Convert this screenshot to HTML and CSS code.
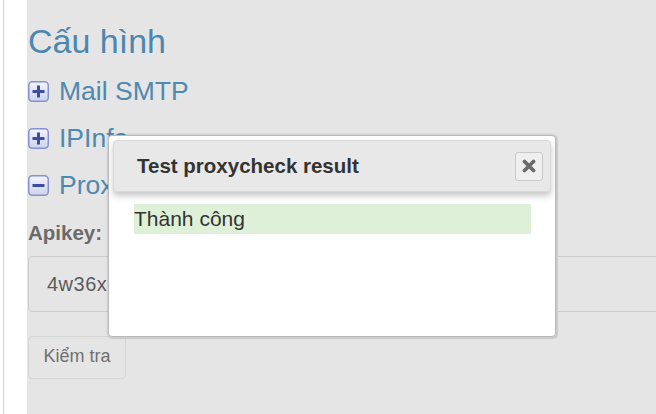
FILE: index.html
```html
<!DOCTYPE html>
<html lang="vi">
<head>
<meta charset="utf-8">
<title>Cấu hình</title>
<link rel="stylesheet" href="styles.css">
</head>
<body>
<div class="page">
  <div class="edge"></div>
  <div class="rule"></div>
  <div class="gutter"></div>
  <main class="main">
    <h1 class="title">Cấu hình</h1>
    <div class="section">
      <svg class="toggle" width="21" height="21" viewBox="0 0 21 21"><defs><linearGradient id="tg1" x1="0" y1="0" x2="0" y2="1"><stop offset="0" stop-color="#f3f4fb"/><stop offset="1" stop-color="#cdd3ee"/></linearGradient></defs><rect x="0.75" y="0.75" width="19.5" height="19.5" rx="3.5" fill="url(#tg1)" stroke="#8791cf" stroke-width="1.5"/><path d="M4.5 10.5h12M10.5 4.5v12" stroke="#3c4da3" stroke-width="3"/></svg>
      <span>Mail SMTP</span>
    </div>
    <div class="section">
      <svg class="toggle" width="21" height="21" viewBox="0 0 21 21"><defs><linearGradient id="tg2" x1="0" y1="0" x2="0" y2="1"><stop offset="0" stop-color="#f3f4fb"/><stop offset="1" stop-color="#cdd3ee"/></linearGradient></defs><rect x="0.75" y="0.75" width="19.5" height="19.5" rx="3.5" fill="url(#tg2)" stroke="#8791cf" stroke-width="1.5"/><path d="M4.5 10.5h12M10.5 4.5v12" stroke="#3c4da3" stroke-width="3"/></svg>
      <span>IPInfo</span>
    </div>
    <div class="section">
      <svg class="toggle" width="21" height="21" viewBox="0 0 21 21"><defs><linearGradient id="tg3" x1="0" y1="0" x2="0" y2="1"><stop offset="0" stop-color="#f3f4fb"/><stop offset="1" stop-color="#cdd3ee"/></linearGradient></defs><rect x="0.75" y="0.75" width="19.5" height="19.5" rx="3.5" fill="url(#tg3)" stroke="#8791cf" stroke-width="1.5"/><path d="M4.5 10.5h12" stroke="#3c4da3" stroke-width="3"/></svg>
      <span>Proxycheck</span>
    </div>
    <div class="label">Apikey:</div>
    <div class="input">4w36x9-7k51p2-0832m6-a1r4e7</div>
    <button class="btn" type="button">Kiểm tra</button>
  </main>
</div>

<div class="dialog" role="dialog">
  <div class="dialog-head">
    <span class="dialog-title">Test proxycheck result</span>
    <button class="close" type="button" aria-label="close"><svg width="14" height="14" viewBox="0 0 14 14"><path d="M2.5 2.5l9 9M11.5 2.5l-9 9" stroke="#6b6b6b" stroke-width="3.8" stroke-linecap="round"/></svg></button>
  </div>
  <div class="dialog-body">
    <div class="success">Thành công</div>
  </div>
</div>
</body>
</html>
```

FILE: styles.css
```css
* { box-sizing: border-box; }

html, body {
  margin: 0;
  padding: 0;
  background: #ffffff;
  font-family: "Liberation Sans", Arial, sans-serif;
}

.page {
  display: flex;
  height: 414px;
  overflow: hidden;
}

.edge { width: 3px; background: #ffffff; }
.rule { width: 1px; background: #d2d2d2; }
.gutter { width: 23px; background: #ffffff; }

.main {
  flex: 1;
  background: #e5e5e5;
  padding-left: 1px;
  overflow: hidden;
}

.title {
  margin: 21px 0 0;
  font-size: 34px;
  line-height: 40px;
  font-weight: normal;
  color: #4c87af;
}

.section {
  display: flex;
  align-items: center;
  gap: 10px;
  height: 30px;
  margin-top: 17px;
  font-size: 26.5px;
  line-height: 30px;
  color: #4f89b0;
}

.section:first-of-type { margin-top: 15px; }

.toggle { flex: none; }

.label {
  margin-top: 21px;
  font-size: 20.5px;
  line-height: 24px;
  font-weight: bold;
  color: #6a6a6a;
}

.input {
  margin-top: 11px;
  width: 660px;
  height: 56px;
  border: 1px solid #cdcdcd;
  border-radius: 4px;
  padding-left: 18px;
  font-size: 20px;
  letter-spacing: 0.5px;
  line-height: 54px;
  color: #5a5a5a;
  white-space: nowrap;
  overflow: hidden;
}

.btn {
  display: block;
  margin-top: 24px;
  width: 98px;
  height: 43px;
  padding: 0 0 2px;
  background: #e5e5e5;
  border: 1px solid #d5d5d5;
  border-radius: 4px;
  font-family: "Liberation Sans", Arial, sans-serif;
  font-size: 18px;
  line-height: 39px;
  color: #707070;
}

.dialog {
  position: absolute;
  left: 108px;
  top: 135px;
  width: 448px;
  height: 202px;
  background: #ffffff;
  border: 1px solid #b9b9b9;
  border-radius: 4px;
  padding: 4px;
  box-shadow: 1px 1px 0 1px #cbcbcb, 0 0 3px rgba(0, 0, 0, 0.2);
}

.dialog-head {
  display: flex;
  align-items: center;
  justify-content: space-between;
  height: 52px;
  padding: 0 7px 0 23px;
  background: #e8e8e8;
  border: 1px solid #dadada;
  border-radius: 4px;
  box-shadow: 0 4px 6px rgba(0, 0, 0, 0.22);
}

.dialog-title {
  font-size: 20.5px;
  line-height: 22px;
  font-weight: bold;
  color: #333333;
}

.close {
  display: flex;
  align-items: center;
  justify-content: center;
  width: 28px;
  height: 29px;
  padding: 0;
  background: #efefef;
  border: 1px solid #c9c9c9;
  border-radius: 3px;
}

.dialog-body {
  padding: 12px 20px 0 21px;
}

.success {
  height: 30px;
  background: #dff0d8;
  font-size: 21px;
  line-height: 30px;
  color: #333333;
}
```
